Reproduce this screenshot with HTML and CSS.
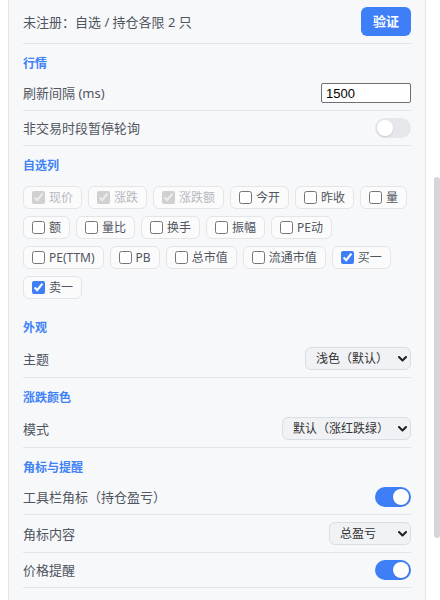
FILE: index.html
```html
<!DOCTYPE html>
<html lang="zh-CN">
<head>
<meta charset="utf-8">
<title>设置</title>
<link rel="stylesheet" href="styles.css">
</head>
<body>
<div class="window">
  <main class="viewport">
    <div class="panel">
      <div class="row row-reg">
        <span class="label">未注册：自选 / 持仓各限 2 只</span>
        <button class="btn" type="button">验证</button>
      </div>

      <section class="section">
        <h3 class="title">行情</h3>
        <div class="row">
          <span class="label">刷新间隔 (ms)</span>
          <input class="num" type="text" value="1500">
        </div>
        <div class="row">
          <span class="label">非交易时段暂停轮询</span>
          <span class="switch"><span class="knob"></span></span>
        </div>
      </section>

      <section class="section">
        <h3 class="title">自选列</h3>
        <div class="chips">
          <label class="chip is-disabled"><input type="checkbox" checked disabled>现价</label>
          <label class="chip is-disabled"><input type="checkbox" checked disabled>涨跌</label>
          <label class="chip is-disabled"><input type="checkbox" checked disabled>涨跌额</label>
          <label class="chip"><input type="checkbox">今开</label>
          <label class="chip"><input type="checkbox">昨收</label>
          <label class="chip"><input type="checkbox">量</label>
          <label class="chip"><input type="checkbox">额</label>
          <label class="chip"><input type="checkbox">量比</label>
          <label class="chip"><input type="checkbox">换手</label>
          <label class="chip"><input type="checkbox">振幅</label>
          <label class="chip"><input type="checkbox">PE动</label>
          <label class="chip"><input type="checkbox">PE(TTM)</label>
          <label class="chip"><input type="checkbox">PB</label>
          <label class="chip"><input type="checkbox">总市值</label>
          <label class="chip"><input type="checkbox">流通市值</label>
          <label class="chip"><input type="checkbox" checked>买一</label>
          <label class="chip"><input type="checkbox" checked>卖一</label>
        </div>
      </section>

      <section class="section">
        <h3 class="title">外观</h3>
        <div class="row">
          <span class="label">主题</span>
          <div class="select w-theme"><span>浅色（默认）</span><svg class="chev" width="9" height="6" viewBox="0 0 9 6"><path d="M1 1l3.5 3.5L8 1"/></svg></div>
        </div>
      </section>

      <section class="section">
        <h3 class="title">涨跌颜色</h3>
        <div class="row">
          <span class="label">模式</span>
          <div class="select w-color"><span>默认（涨红跌绿）</span><svg class="chev" width="9" height="6" viewBox="0 0 9 6"><path d="M1 1l3.5 3.5L8 1"/></svg></div>
        </div>
      </section>

      <section class="section">
        <h3 class="title">角标与提醒</h3>
        <div class="row">
          <span class="label">工具栏角标（持仓盈亏）</span>
          <span class="switch is-on"><span class="knob"></span></span>
        </div>
        <div class="row">
          <span class="label">角标内容</span>
          <div class="select w-badge"><span>总盈亏</span><svg class="chev" width="9" height="6" viewBox="0 0 9 6"><path d="M1 1l3.5 3.5L8 1"/></svg></div>
        </div>
        <div class="row">
          <span class="label">价格提醒</span>
          <span class="switch is-on"><span class="knob"></span></span>
        </div>
      </section>
    </div>
  </main>
  <div class="scrollbar"><div class="thumb"></div></div>
</div>
</body>
</html>
```

FILE: styles.css
```css
* { box-sizing: border-box; }

html, body {
  margin: 0;
  padding: 0;
  background: #ffffff;
}

body {
  font-family: "Noto Sans", "Noto Sans CJK SC", sans-serif;
  color: #50555e;
}

.window {
  display: flex;
  height: 600px;
  overflow: hidden;
}

.viewport {
  flex: 1;
  padding: 0 8px;
  min-width: 0;
}

.panel {
  min-height: 100%;
  background: #f7f8fa;
  border-left: 1px solid #e4e6ea;
  border-right: 1px solid #e4e6ea;
  padding: 0 14px;
}

.scrollbar {
  width: 6px;
  flex: none;
}

.thumb {
  margin-top: 177px;
  height: 361px;
  border-radius: 3px;
  background: #d4d6db;
}

.row {
  display: flex;
  align-items: center;
  justify-content: space-between;
  padding: 7px 0;
  border-bottom: 1px solid #e4e6ea;
}

.label {
  font-size: 13px;
  line-height: 20px;
  color: #50555e;
}

.btn {
  height: 29px;
  padding: 0 12px;
  border: 0;
  border-radius: 6px;
  background: #3e7ff8;
  color: #ffffff;
  font-family: inherit;
  font-size: 13px;
  font-weight: 600;
  line-height: 29px;
}

.title {
  margin: 12px 0 4px;
  font-size: 12px;
  line-height: 16px;
  font-weight: 700;
  color: #3e82f7;
}

.num {
  width: 90px;
  height: 20px;
  margin: 0;
  padding: 0 4px;
  border: 1px solid #6f6f6f;
  border-radius: 2px;
  background: #ffffff;
  font-family: "Liberation Sans", Arial, sans-serif;
  font-size: 13px;
  color: #000000;
}

.switch {
  display: flex;
  align-items: center;
  width: 36px;
  height: 20px;
  padding: 2px;
  border-radius: 10px;
  background: #e5e7eb;
}

.switch .knob {
  width: 16px;
  height: 16px;
  border-radius: 50%;
  background: #ffffff;
  box-shadow: 0 1px 2px rgba(0, 0, 0, 0.12);
}

.switch.is-on {
  background: #3e7ff8;
  justify-content: flex-end;
}

.chips {
  display: flex;
  flex-wrap: wrap;
  gap: 7px 6px;
  padding: 8px 0 9px;
}

.chip {
  display: inline-flex;
  align-items: center;
  height: 23px;
  padding: 0 8px;
  border: 1px solid #e3e5e9;
  border-radius: 6px;
  background: #fbfbfc;
  font-size: 12px;
  line-height: 16px;
  color: #50555e;
}

.chip input {
  width: 13px;
  height: 13px;
  margin: 0 4px 0 0;
  accent-color: #3e7ff8;
}

.chip.is-disabled {
  color: #b4b8be;
}

.select {
  display: inline-flex;
  align-items: center;
  justify-content: space-between;
  height: 23px;
  padding: 0 3px 0 10px;
  border: 1px solid #dadde2;
  border-radius: 6px;
  background: #f1f2f5;
  font-size: 12px;
  line-height: 16px;
  color: #333333;
}

.w-theme { width: 106px; }
.w-color { width: 129px; }
.w-badge { width: 82px; }

.chev {
  flex: none;
}

.chev path {
  fill: none;
  stroke: #1f1f1f;
  stroke-width: 2;
  stroke-linecap: round;
  stroke-linejoin: round;
}
```
